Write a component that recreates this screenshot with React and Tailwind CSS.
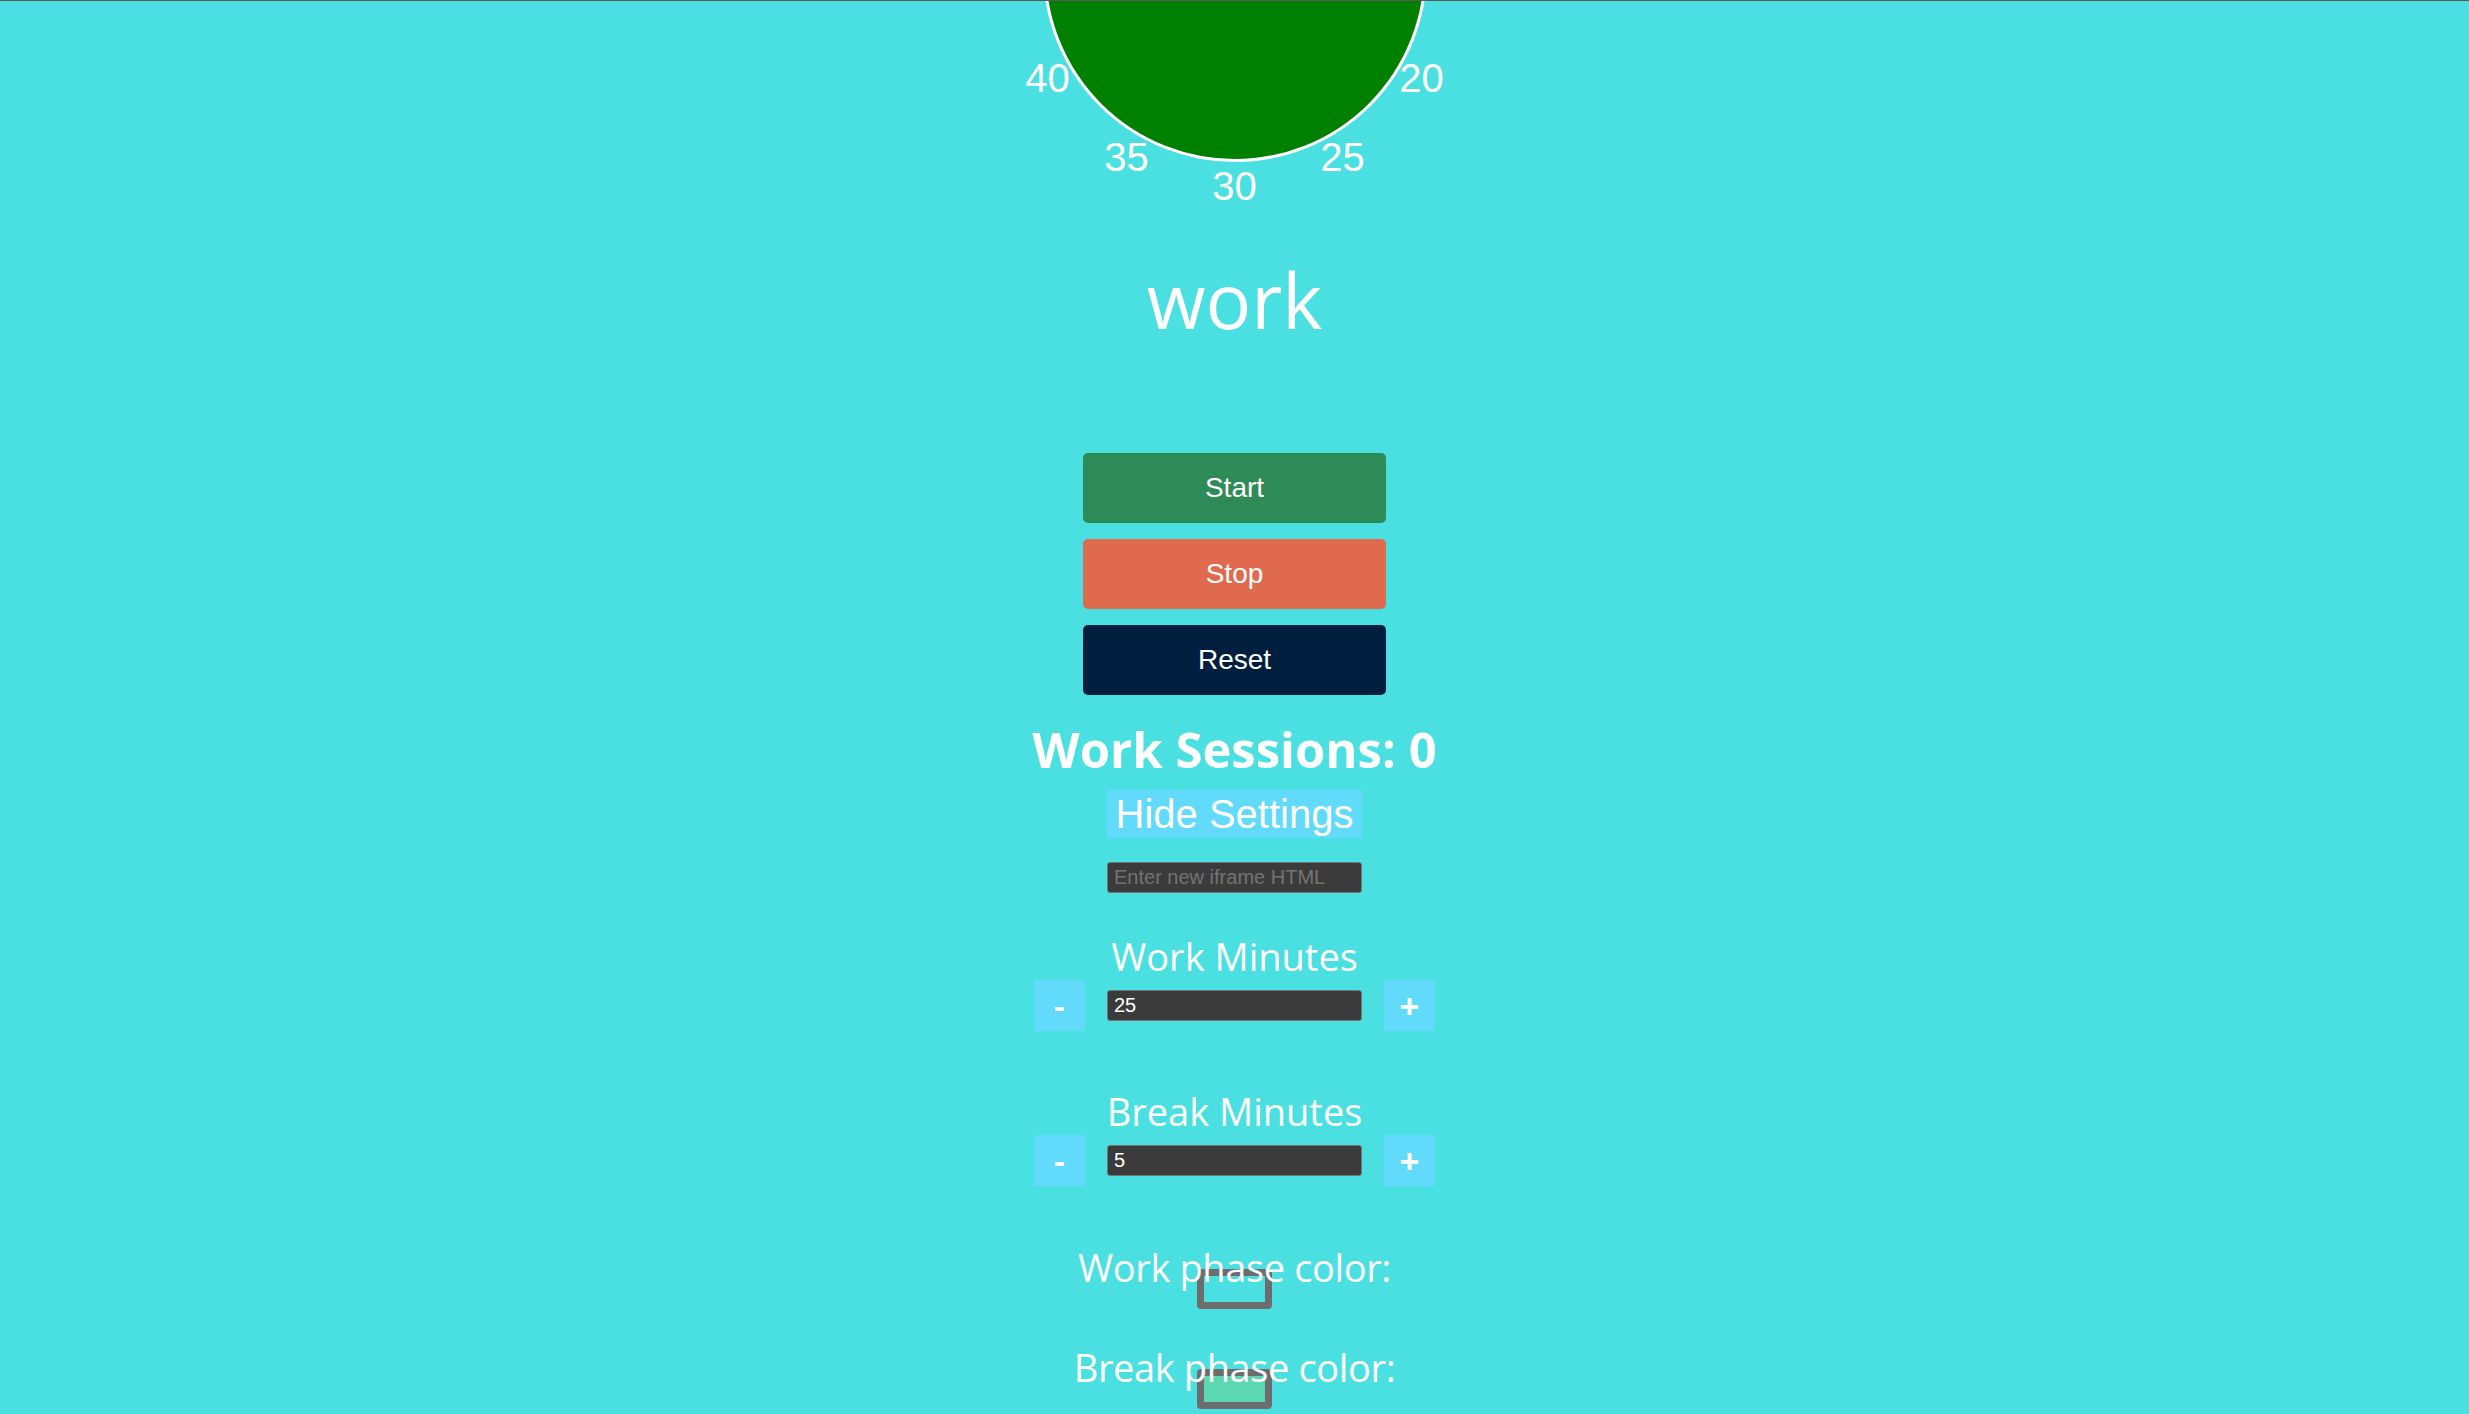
import { useState } from 'react';

// only the marks that show below the top edge
const ticks = [20, 25, 30, 35, 40];

const Dial = ({ color }) => (
  <div className="relative w-[384px] h-[384px] -mt-[223px] shrink-0">
    <div className="w-full h-full rounded-full border-[3px] border-white" style={{ backgroundColor: color }}></div>
    {ticks.map((m) => {
      const a = (m * 6 * Math.PI) / 180;
      return (
        <span
          key={m}
          className="absolute -translate-x-1/2 -translate-y-1/2 text-[40px] leading-none text-white font-['Liberation_Sans',Arial,sans-serif]"
          style={{ left: 192 + 216 * Math.sin(a), top: 192 - 216 * Math.cos(a) }}
        >
          {m}
        </span>
      );
    })}
  </div>
);

const Stepper = ({ label, value, onChange, first }) => (
  <div className="flex flex-col items-center">
    <h3 className={`${first ? 'mt-[44px]' : 'mt-[61px]'} text-[38px] leading-none text-white font-['Open_Sans',sans-serif]`}>{label}</h3>
    <div className="mt-[5px] flex items-center gap-[22px]">
      <button
        onClick={() => onChange(value - 1)}
        className="w-[51px] h-[51px] bg-[#61dafb] text-white text-[34px] font-bold leading-none font-['Liberation_Sans',Arial,sans-serif]"
      >
        -
      </button>
      <input
        type="number"
        value={value}
        onChange={(e) => onChange(Number(e.target.value))}
        className="w-[255px] h-[31px] bg-[#3b3b3b] border border-[#767676] rounded-[3px] px-[6px] text-white text-[20px] font-['Liberation_Sans',Arial,sans-serif] outline-none [appearance:textfield] [&::-webkit-inner-spin-button]:appearance-none"
      />
      <button
        onClick={() => onChange(value + 1)}
        className="w-[51px] h-[51px] bg-[#61dafb] text-white text-[34px] font-bold leading-none font-['Liberation_Sans',Arial,sans-serif]"
      >
        +
      </button>
    </div>
  </div>
);

const Swatch = ({ label, color, spaced }) => (
  <div className="flex flex-col items-center">
    <label className={`${spaced ? 'mt-[62px]' : 'mt-[39px]'} relative z-10 text-[38px] tracking-[-0.01em] leading-none text-white font-['Open_Sans',sans-serif]`}>
      {label}
    </label>
    <div className="-mt-[17px] w-[75px] h-[40px] border-[7px] border-[#6d6d6d] rounded-[4px]" style={{ backgroundColor: color }}></div>
  </div>
);

export default function App() {
  const [workMinutes, setWorkMinutes] = useState(25);
  const [breakMinutes, setBreakMinutes] = useState(5);
  const [showSettings, setShowSettings] = useState(true);
  const sessions = 0;

  return (
    <div className="min-h-screen bg-[#4adfe0]">
      <div className="h-px bg-[#5a5a5a]"></div>
      <main className="overflow-hidden flex flex-col items-center pb-10">
        <Dial color="#008000" />

        <h1 className="mt-[100px] text-[76px] leading-none text-white font-['Open_Sans',sans-serif]">work</h1>

        <div className="mt-[115px] flex flex-col gap-4 font-['Liberation_Sans',Arial,sans-serif] text-[28px] text-white">
          <button className="w-[303px] h-[70px] rounded-[5px] bg-[#2e8b57]">Start</button>
          <button className="w-[303px] h-[70px] rounded-[5px] bg-[#e06a4e]">Stop</button>
          <button className="w-[303px] h-[70px] rounded-[5px] bg-[#001f3f]">Reset</button>
        </div>

        <h2 className="mt-[30px] text-[49px] font-bold leading-none text-white font-['Open_Sans',sans-serif]">
          Work Sessions: {sessions}
        </h2>

        <button
          onClick={() => setShowSettings(!showSettings)}
          className="mt-[16px] h-[48px] px-[9px] bg-[#61dafb] text-white text-[40px] leading-none font-['Liberation_Sans',Arial,sans-serif]"
        >
          {showSettings ? 'Hide Settings' : 'Show Settings'}
        </button>

        {showSettings && (
          <div className="flex flex-col items-center">
            <input
              type="text"
              placeholder="Enter new iframe HTML"
              className="mt-[24px] w-[255px] h-[31px] bg-[#3b3b3b] border border-[#767676] rounded-[3px] px-[6px] text-white text-[20px] placeholder:text-[#737373] font-['Liberation_Sans',Arial,sans-serif] outline-none"
            />
            <Stepper label="Work Minutes" value={workMinutes} onChange={setWorkMinutes} first />
            <Stepper label="Break Minutes" value={breakMinutes} onChange={setBreakMinutes} />
            <Swatch label="Work phase color:" color="#4adfe0" spaced />
            <Swatch label="Break phase color:" color="#5cd8b0" />
          </div>
        )}
      </main>
    </div>
  );
}
